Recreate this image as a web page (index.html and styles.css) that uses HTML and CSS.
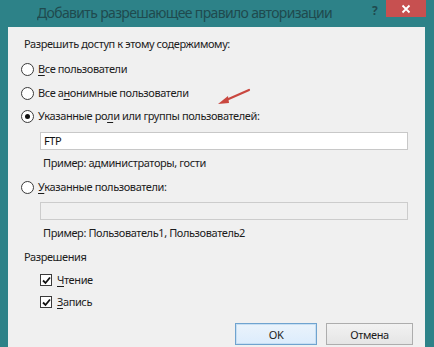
FILE: index.html
```html
<!DOCTYPE html>
<html lang="ru">
<head>
<meta charset="utf-8">
<link rel="stylesheet" href="styles.css">
</head>
<body>
<div class="window">
  <div class="titlebar">
    <div class="title">Добавить разрешающее правило авторизации</div>
    <div class="help">?</div>
    <div class="close">
      <svg width="10" height="10" viewBox="0 0 10 10"><path d="M1.5 1.5L8.5 8.5M8.5 1.5L1.5 8.5" stroke="#fff" stroke-width="1.8"/></svg>
    </div>
  </div>
  <div class="content">
    <div class="row heading">Разрешить доступ к этому содержимому:</div>
    <div class="row opt r1"><span class="radio"></span><span><u>В</u>се пользователи</span></div>
    <div class="row opt r2"><span class="radio"></span><span>Все а<u>н</u>онимные пользователи</span></div>
    <div class="row opt r3"><span class="radio checked"></span><span>Указанные ро<u>л</u>и или группы пользователей:</span></div>
    <div class="field f1">FTP</div>
    <div class="row hint h1">Пример: администраторы, гости</div>
    <div class="row opt r4"><span class="radio"></span><span><u>У</u>казанные пользователи:</span></div>
    <div class="field disabled f2"></div>
    <div class="row hint h2">Пример: Пользователь1, Пользователь2</div>
    <div class="row heading perm">Разрешения</div>
    <div class="row check c1"><span class="box"><svg width="9" height="9" viewBox="0 0 9 9"><path d="M1 4.5L3.5 7L8 1.5" fill="none" stroke="#111" stroke-width="1.8"/></svg></span><span><u>Ч</u>тение</span></div>
    <div class="row check c2"><span class="box"><svg width="9" height="9" viewBox="0 0 9 9"><path d="M1 4.5L3.5 7L8 1.5" fill="none" stroke="#111" stroke-width="1.8"/></svg></span><span><u>З</u>апись</span></div>
    <div class="buttons">
      <div class="btn ok">OK</div>
      <div class="btn">Отмена</div>
    </div>
    <svg class="arrow" width="36" height="20" viewBox="0 0 36 20"><path d="M33 3L8 14" stroke="#c9473f" stroke-width="2.2" stroke-linecap="round"/><path d="M2 17L12 9L13 16Z" fill="#c9473f"/></svg>
  </div>
</div>
</body>
</html>
```

FILE: styles.css
```css
html, body { margin: 0; padding: 0; }
body {
  width: 434px; height: 347px; overflow: hidden;
  font-family: "Noto Sans", "Open Sans", sans-serif;
  font-size: 11px;
  letter-spacing: -0.4px;
  color: #1c1c1c;
}
.window {
  width: 434px; height: 347px;
  background: #2d8288;
  display: flex; flex-direction: column;
  overflow: hidden;
}
.titlebar {
  height: 27px;
  display: flex; align-items: flex-start;
  flex: none;
}
.title {
  margin-left: 37px; margin-top: 4px;
  font-size: 14px; color: #1f4a4e;
  flex: 1;
  white-space: nowrap; overflow: hidden;
  letter-spacing: -0.65px;
  line-height: 18px;
}
.help {
  margin-top: 2px;
  width: 14px;
  font-weight: bold; font-size: 12px; color: #1f4a4e;
  letter-spacing: 0;
}
.close {
  margin-left: 0; margin-right: 8px;
  width: 40px; height: 17px;
  background: #c75050;
  display: flex; align-items: center; justify-content: center;
}
.content {
  position: relative;
  margin: 0 9px 0 8px;
  flex: 1;
  background: #f0f0f0;
  padding: 9px 0 0 16px;
  display: flex; flex-direction: column; align-items: flex-start;
}
.row { height: 16px; line-height: 16px; display: flex; align-items: center; white-space: nowrap; }
u { text-decoration-thickness: 1px; text-underline-offset: 2px; }
.opt { margin-left: -3px; gap: 4px; }
.r1 { margin-top: 9px; }
.r2 { margin-top: 8px; }
.r3 { margin-top: 7px; }
.r4 { margin-top: 8px; }
.radio {
  width: 11px; height: 11px; border-radius: 50%;
  border: 1px solid #3a3a3a; background: #fff;
  display: flex; align-items: center; justify-content: center;
  box-sizing: content-box;
}
.radio.checked::after {
  content: ""; width: 5px; height: 5px; border-radius: 50%; background: #111;
}
.field {
  box-sizing: border-box;
  margin-left: 16px;
  width: 368px; height: 18px;
  border: 1px solid #c8c8c8; background: #fff;
  padding-left: 3px; line-height: 16px; font-size: 11px; color: #111;
}
.field.disabled { background: #f0f0f0; border-color: #cccccc; }
.f1 { margin-top: 8px; }
.f2 { margin-top: 7px; }
.hint { margin-left: 19px; margin-top: 5px; }
.perm { margin-top: 8px; }
.check { margin-left: 16px; gap: 5px; }
.c1 { margin-top: 7px; }
.c2 { margin-top: 6px; }
.box {
  width: 10px; height: 10px; border: 1px solid #3a3a3a; background: #fff;
  display: flex; align-items: center; justify-content: center;
}
.buttons {
  align-self: flex-end;
  margin-top: 13px; margin-right: 12px;
  display: flex; gap: 9px;
}
.btn {
  box-sizing: border-box;
  width: 82px; height: 22px;
  border: 1px solid #adadad;
  background: linear-gradient(#f2f2f2, #e5e5e5);
  display: flex; align-items: center; justify-content: center;
  font-size: 11px;
}
.btn + .btn { width: 87px; }
.btn.ok { border-color: #6fa3cf; background: linear-gradient(#eaf3fb, #dcecfc); box-shadow: inset 0 0 0 1px #c7dff3; }
.arrow { position: absolute; left: 208px; top: 60px; }
```
